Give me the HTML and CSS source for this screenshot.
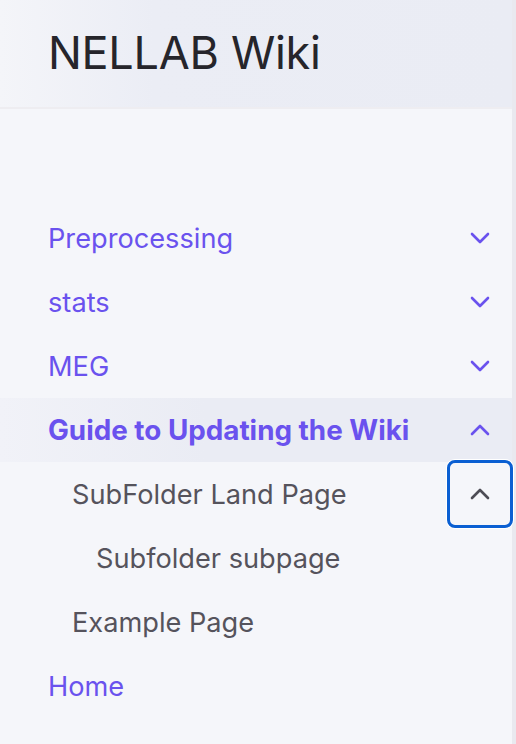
FILE: index.html
```html
<!DOCTYPE html>
<html lang="en">
<head>
<meta charset="utf-8">
<title>NELLAB Wiki</title>
<link rel="stylesheet" href="styles.css">
</head>
<body>
<div class="page">
  <div class="sidebar">
    <header class="brand"><span class="brand-title">NELLAB Wiki</span></header>
    <nav class="menu">
      <ul class="list">
        <li class="row">
          <a class="link cat">Preprocessing</a>
          <span class="caret"><svg viewBox="0 0 20 12" width="20" height="12"><path d="M2 2 L10 10 L18 2" /></svg></span>
        </li>
        <li class="row">
          <a class="link cat">stats</a>
          <span class="caret"><svg viewBox="0 0 20 12" width="20" height="12"><path d="M2 2 L10 10 L18 2" /></svg></span>
        </li>
        <li class="row">
          <a class="link cat">MEG</a>
          <span class="caret"><svg viewBox="0 0 20 12" width="20" height="12"><path d="M2 2 L10 10 L18 2" /></svg></span>
        </li>
        <li class="row active">
          <a class="link cat bold">Guide to Updating the Wiki</a>
          <span class="caret"><svg viewBox="0 0 20 12" width="20" height="12"><path d="M2 10 L10 2 L18 10" /></svg></span>
        </li>
        <li class="row lvl1">
          <a class="link sub">SubFolder Land Page</a>
          <button class="caret-btn"><svg viewBox="0 0 20 12" width="20" height="12"><path d="M2 10 L10 2 L18 10" /></svg></button>
        </li>
        <li class="row lvl2">
          <a class="link sub">Subfolder subpage</a>
        </li>
        <li class="row lvl1">
          <a class="link sub">Example Page</a>
        </li>
        <li class="row">
          <a class="link cat">Home</a>
        </li>
      </ul>
    </nav>
  </div>
  <div class="track"></div>
</div>
</body>
</html>
```

FILE: styles.css
```css
html, body {
  margin: 0;
  padding: 0;
}
body {
  background: #f5f6fa;
  font-family: Inter, "Noto Sans", "Liberation Sans", sans-serif;
}
.page {
  display: flex;
  width: 516px;
  height: 744px;
  overflow: hidden;
}
.sidebar {
  width: 512px;
  display: flex;
  flex-direction: column;
}
.track {
  width: 4px;
  background: #e9e9ef;
}
.brand {
  height: 107px;
  flex: none;
  border-bottom: 2px solid #eeedf1;
  background: linear-gradient(90deg, #f4f5f9 0%, #ebedf5 30%, #eaecf4 100%);
  display: flex;
  align-items: center;
  padding-left: 48px;
}
.brand-title {
  font-size: 45px;
  color: #26252b;
  font-weight: 400;
  letter-spacing: -0.3px;
  margin-top: -2px;
}
.menu {
  padding-top: 97px;
}
.list {
  list-style: none;
  margin: 0;
  padding: 0;
}
.row {
  height: 64px;
  display: flex;
  align-items: center;
  padding-left: 48px;
  position: relative;
}
.row.lvl1 { padding-left: 72px; }
.row.lvl2 { padding-left: 96px; }
.row.active {
  background: linear-gradient(90deg, #f1f2f8 0%, #eaecf4 40%, #eaecf4 100%);
}
.link {
  font-size: 27.2px;
  flex: 1;
}
.cat { color: #6a52ee; }
.bold { font-weight: 700; font-size: 27.8px; }
.sub { color: #55535c; }
.caret {
  width: 64px;
  display: flex;
  justify-content: center;
  align-items: center;
}
.caret svg path {
  fill: none;
  stroke: #6a52ee;
  stroke-width: 2.6;
  stroke-linecap: round;
  stroke-linejoin: round;
}
.caret-btn {
  width: 62px;
  height: 64px;
  margin-right: 1px;
  padding: 0;
  border: none;
  background: transparent;
  display: flex;
  justify-content: center;
  align-items: center;
  outline: 3px solid #0a5fd2;
  outline-offset: -1px;
  border-radius: 6px;
  box-shadow: 0 0 0 3px #ffffff;
}
.caret-btn svg path {
  fill: none;
  stroke: #4d4c55;
  stroke-width: 2.6;
  stroke-linecap: round;
  stroke-linejoin: round;
}
```
